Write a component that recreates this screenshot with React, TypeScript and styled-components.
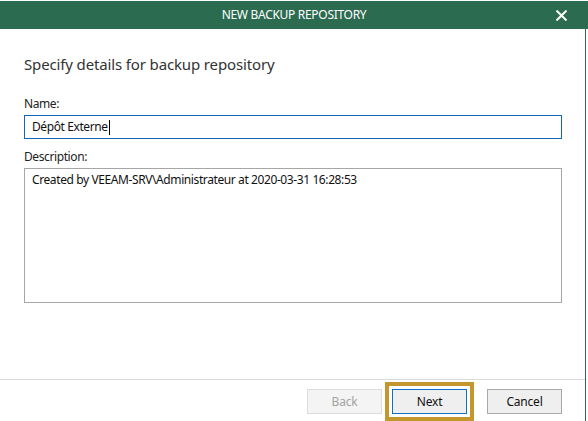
import React from "react";
import styled, { createGlobalStyle } from "styled-components";

const Global = createGlobalStyle`
  html, body { margin: 0; padding: 0; background: #ffffff; }
  body { font-family: "Noto Sans", "Open Sans", "Liberation Sans", sans-serif; }
  * { box-sizing: border-box; }
`;

const GREEN = "#2b6b4f";

const Frame = styled.div`
  width: 588px;
  height: 421px;
  padding-top: 1px;
  background: #ffffff;
  display: flex;
  flex-direction: column;
  overflow: hidden;
`;

const TitleBar = styled.div`
  height: 28px;
  background: ${GREEN};
  display: grid;
  grid-template-columns: 1fr auto 1fr;
  align-items: center;
  color: #ffffff;
  flex: none;
`;

const Title = styled.div`
  grid-column: 2;
  font-size: 12px;
  letter-spacing: -0.3px;
  line-height: 28px;
`;

const CloseButton = styled.button`
  grid-column: 3;
  justify-self: end;
  margin-right: 20px;
  width: 14px;
  height: 14px;
  padding: 0;
  border: none;
  background: transparent;
  display: flex;
  align-items: center;
  justify-content: center;
  cursor: pointer;
`;

const Body = styled.div`
  width: 586px;
  flex: 1;
  border-right: 1px solid ${GREEN};
  display: flex;
  flex-direction: column;
`;

const Content = styled.div`
  flex: 1;
  padding: 25px 23px 0 24px;
  display: flex;
  flex-direction: column;
`;

const Heading = styled.h1`
  margin: 0 0 22px 0;
  font-size: 15px;
  font-weight: 400;
  line-height: 20px;
  letter-spacing: -0.14px;
  color: #333333;
`;

const Label = styled.label`
  display: block;
  font-size: 12px;
  line-height: 16px;
  letter-spacing: -0.4px;
  color: #222222;
  margin-bottom: 3px;
`;

const TextInput = styled.div`
  height: 24px;
  border: 1px solid #1565b8;
  padding: 0 7px;
  font-size: 12px;
  line-height: 22px;
  letter-spacing: -0.4px;
  color: #111111;
  display: flex;
  align-items: center;
  margin-bottom: 10px;
`;

const Caret = styled.span`
  display: inline-block;
  width: 1px;
  height: 15px;
  background: #000000;
  margin-left: 1px;
`;

const TextArea = styled.div`
  height: 135px;
  border: 1px solid #a6a6a6;
  padding: 3px 7px;
  font-size: 12px;
  line-height: 16px;
  letter-spacing: -0.4px;
  color: #111111;
`;

const Separator = styled.div`
  height: 1px;
  background: #dadada;
  flex: none;
`;

const Footer = styled.div`
  height: 41px;
  flex: none;
  display: flex;
  align-items: center;
  justify-content: flex-end;
  padding: 0 23px 0 0;
  gap: 10px;
`;

const Button = styled.button<{ $variant?: "disabled" | "focused" | "normal"; $gapLeft?: number }>`
  width: 75px;
  height: 25px;
  margin-top: 1px;
  margin-left: ${(p) => p.$gapLeft ?? 0}px;
  font-family: inherit;
  font-size: 12px;
  letter-spacing: -0.2px;
  padding: 0;
  border: 1px solid
    ${(p) => (p.$variant === "disabled" ? "#dcdcdc" : p.$variant === "focused" ? "#0a70c8" : "#a8a8a8")};
  background: ${(p) => (p.$variant === "disabled" ? "#f4f4f4" : "#efefef")};
  color: ${(p) => (p.$variant === "disabled" ? "#a3a3a3" : "#111111")};
  outline: ${(p) => (p.$variant === "focused" ? "4px solid #c3962e" : "none")};
  outline-offset: 3px;
`;

export default function App() {
  return (
    <>
      <Global />
      <Frame>
        <TitleBar>
          <Title>NEW BACKUP REPOSITORY</Title>
          <CloseButton aria-label="Close">
            <svg width="11" height="11" viewBox="0 0 11 11">
              <path d="M1.2 1.2 L9.8 9.8 M9.8 1.2 L1.2 9.8" stroke="#ffffff" strokeWidth="2" strokeLinecap="square" />
            </svg>
          </CloseButton>
        </TitleBar>
        <Body>
          <Content>
            <Heading>Specify details for backup repository</Heading>
            <Label>Name:</Label>
            <TextInput>
              Dépôt Externe<Caret />
            </TextInput>
            <Label>Description:</Label>
            <TextArea>Created by VEEAM-SRV\Administrateur at 2020-03-31 16:28:53</TextArea>
          </Content>
          <Separator />
          <Footer>
            <Button $variant="disabled" disabled>Back</Button>
            <Button $variant="focused">Next</Button>
            <Button $variant="normal" $gapLeft={10}>Cancel</Button>
          </Footer>
        </Body>
      </Frame>
    </>
  );
}
